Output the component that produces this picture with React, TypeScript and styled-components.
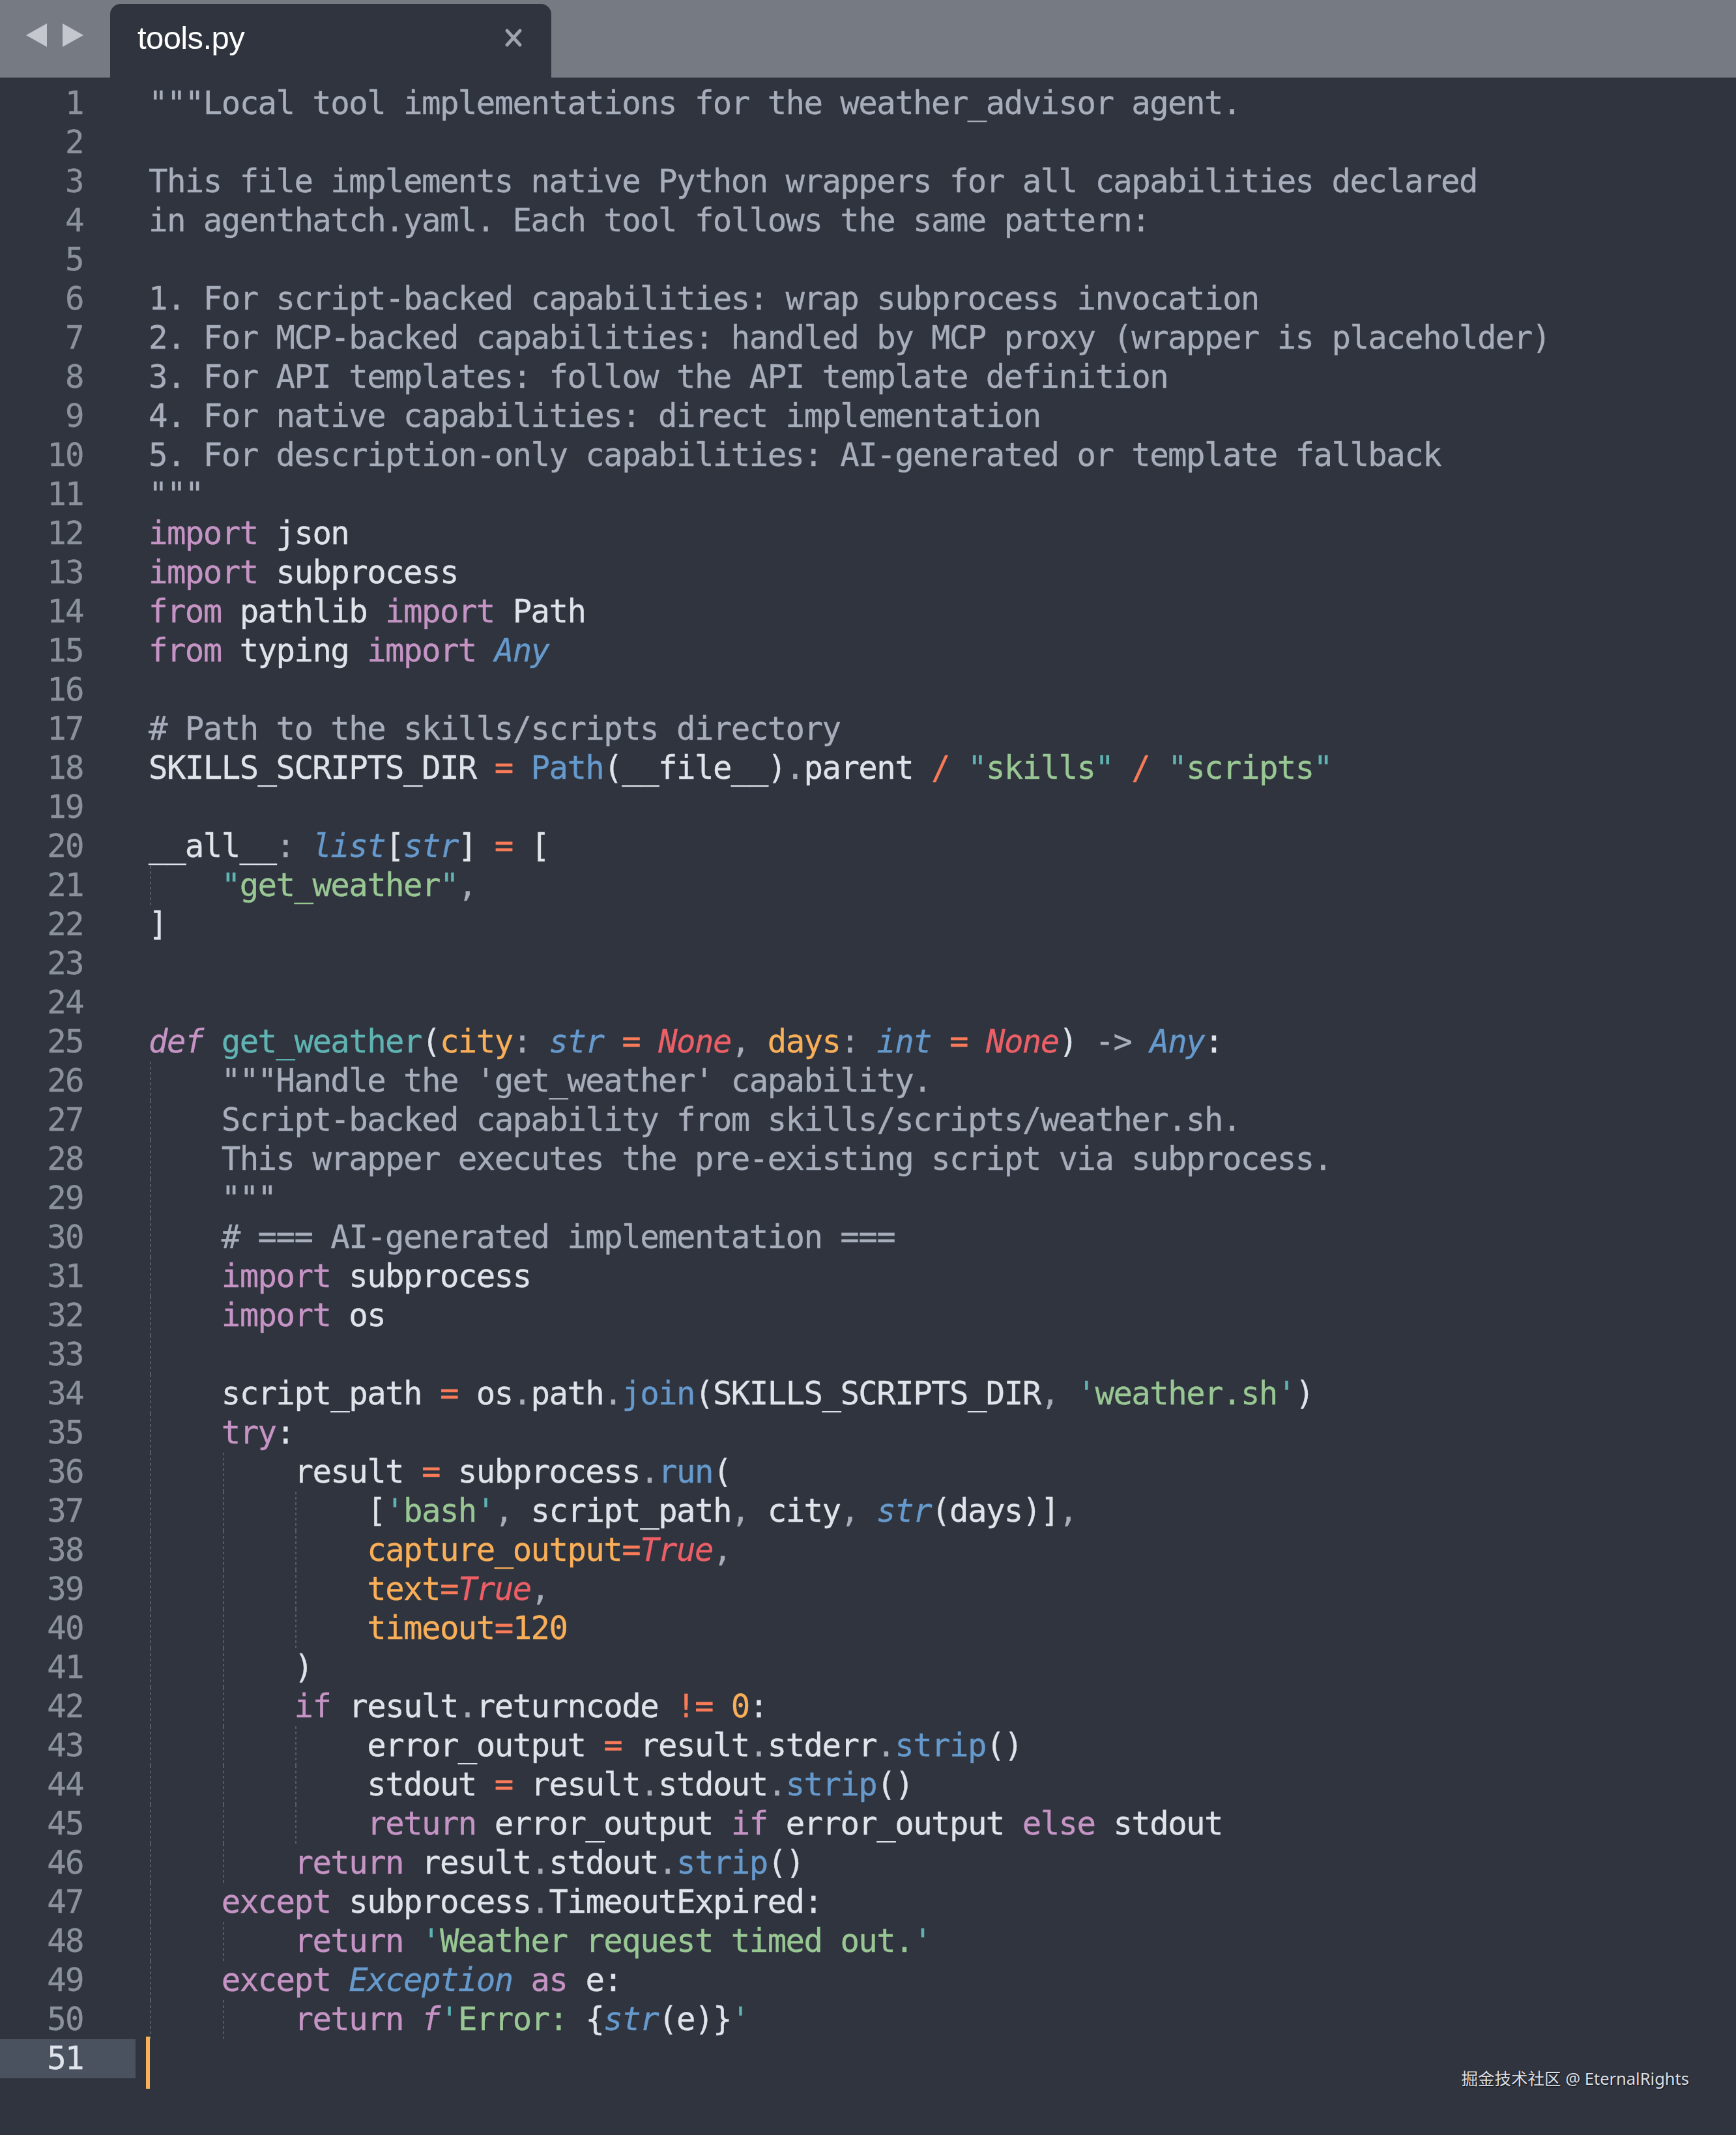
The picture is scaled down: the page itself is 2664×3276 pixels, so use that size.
import React from 'react';
import styled, { createGlobalStyle, css } from 'styled-components';

const GlobalStyle = createGlobalStyle`
  html, body { margin: 0; padding: 0; background: #2f343e; }
  #root { width: 2664px; height: 3276px; overflow: hidden; }
`;

type Kind =
  | 'p' | 'kw' | 'kwi' | 'str' | 'q' | 'fn' | 'type' | 'cls' | 'name'
  | 'param' | 'const' | 'op' | 'num' | 'cm' | 'punc';

const palette: Record<Kind, { color: string; italic?: boolean }> = {
  p: { color: '#dfe3ea' },
  kw: { color: '#c594c5' },
  kwi: { color: '#c594c5', italic: true },
  str: { color: '#99c794' },
  q: { color: '#5fb3b3' },
  fn: { color: '#6699cc' },
  type: { color: '#6699cc', italic: true },
  cls: { color: '#6699cc' },
  name: { color: '#5fb3b3' },
  param: { color: '#f9ae58' },
  const: { color: '#ec5f67', italic: true },
  op: { color: '#f97b58' },
  num: { color: '#f9ae58' },
  cm: { color: '#a7adba' },
  punc: { color: '#a7adba' },
};

type Tok = [string, Kind?];
type LineDef = { indent?: number; guides?: number; toks: Tok[] };

const cm = (s: string, indent = 0): LineDef => ({ indent, toks: [[s, 'cm']] });
const blank = (guides = 0): LineDef => ({ guides, toks: [] });

const LINES: LineDef[] = [
  cm('"""Local tool implementations for the weather_advisor agent.'),
  blank(),
  cm('This file implements native Python wrappers for all capabilities declared'),
  cm('in agenthatch.yaml. Each tool follows the same pattern:'),
  blank(),
  cm('1. For script-backed capabilities: wrap subprocess invocation'),
  cm('2. For MCP-backed capabilities: handled by MCP proxy (wrapper is placeholder)'),
  cm('3. For API templates: follow the API template definition'),
  cm('4. For native capabilities: direct implementation'),
  cm('5. For description-only capabilities: AI-generated or template fallback'),
  cm('"""'),
  { toks: [['import', 'kw'], [' json']] },
  { toks: [['import', 'kw'], [' subprocess']] },
  { toks: [['from', 'kw'], [' pathlib '], ['import', 'kw'], [' Path']] },
  { toks: [['from', 'kw'], [' typing '], ['import', 'kw'], [' '], ['Any', 'type']] },
  blank(),
  cm('# Path to the skills/scripts directory'),
  {
    toks: [
      ['SKILLS_SCRIPTS_DIR '], ['=', 'op'], [' '], ['Path', 'cls'], ['(__file__)'], ['.', 'punc'],
      ['parent '], ['/', 'op'], [' '], ['"', 'q'], ['skills', 'str'], ['"', 'q'], [' '], ['/', 'op'],
      [' '], ['"', 'q'], ['scripts', 'str'], ['"', 'q'],
    ],
  },
  blank(),
  {
    toks: [
      ['__all__'], [':', 'punc'], [' '], ['list', 'type'], ['['], ['str', 'type'], [']'], [' '],
      ['=', 'op'], [' ['],
    ],
  },
  { indent: 1, toks: [['"', 'q'], ['get_weather', 'str'], ['"', 'q'], [',', 'punc']] },
  { toks: [[']']] },
  blank(),
  blank(),
  {
    toks: [
      ['def', 'kwi'], [' '], ['get_weather', 'name'], ['('], ['city', 'param'], [':', 'punc'], [' '],
      ['str', 'type'], [' '], ['=', 'op'], [' '], ['None', 'const'], [',', 'punc'], [' '],
      ['days', 'param'], [':', 'punc'], [' '], ['int', 'type'], [' '], ['=', 'op'], [' '],
      ['None', 'const'], [')'], [' '], ['->', 'punc'], [' '], ['Any', 'type'], [':'],
    ],
  },
  cm('"""Handle the \'get_weather\' capability.', 1),
  cm('Script-backed capability from skills/scripts/weather.sh.', 1),
  cm('This wrapper executes the pre-existing script via subprocess.', 1),
  cm('"""', 1),
  cm('# === AI-generated implementation ===', 1),
  { indent: 1, toks: [['import', 'kw'], [' subprocess']] },
  { indent: 1, toks: [['import', 'kw'], [' os']] },
  blank(1),
  {
    indent: 1,
    toks: [
      ['script_path '], ['=', 'op'], [' os'], ['.', 'punc'], ['path'], ['.', 'punc'], ['join', 'fn'],
      ['(SKILLS_SCRIPTS_DIR'], [',', 'punc'], [' '], ["'", 'q'], ['weather.sh', 'str'], ["'", 'q'], [')'],
    ],
  },
  { indent: 1, toks: [['try', 'kw'], [':']] },
  {
    indent: 2,
    toks: [['result '], ['=', 'op'], [' subprocess'], ['.', 'punc'], ['run', 'fn'], ['(']],
  },
  {
    indent: 3,
    toks: [
      ['['], ["'", 'q'], ['bash', 'str'], ["'", 'q'], [',', 'punc'], [' script_path'], [',', 'punc'],
      [' city'], [',', 'punc'], [' '], ['str', 'type'], ['(days)]'], [',', 'punc'],
    ],
  },
  { indent: 3, toks: [['capture_output', 'param'], ['=', 'op'], ['True', 'const'], [',', 'punc']] },
  { indent: 3, toks: [['text', 'param'], ['=', 'op'], ['True', 'const'], [',', 'punc']] },
  { indent: 3, toks: [['timeout', 'param'], ['=', 'op'], ['120', 'num']] },
  { indent: 2, toks: [[')']] },
  {
    indent: 2,
    toks: [['if', 'kw'], [' result'], ['.', 'punc'], ['returncode '], ['!=', 'op'], [' '], ['0', 'num'], [':']],
  },
  {
    indent: 3,
    toks: [
      ['error_output '], ['=', 'op'], [' result'], ['.', 'punc'], ['stderr'], ['.', 'punc'],
      ['strip', 'fn'], ['()'],
    ],
  },
  {
    indent: 3,
    toks: [
      ['stdout '], ['=', 'op'], [' result'], ['.', 'punc'], ['stdout'], ['.', 'punc'], ['strip', 'fn'], ['()'],
    ],
  },
  {
    indent: 3,
    toks: [
      ['return', 'kw'], [' error_output '], ['if', 'kw'], [' error_output '], ['else', 'kw'], [' stdout'],
    ],
  },
  {
    indent: 2,
    toks: [['return', 'kw'], [' result'], ['.', 'punc'], ['stdout'], ['.', 'punc'], ['strip', 'fn'], ['()']],
  },
  { indent: 1, toks: [['except', 'kw'], [' subprocess'], ['.', 'punc'], ['TimeoutExpired:']] },
  {
    indent: 2,
    toks: [['return', 'kw'], [' '], ["'", 'q'], ['Weather request timed out.', 'str'], ["'", 'q']],
  },
  { indent: 1, toks: [['except', 'kw'], [' '], ['Exception', 'type'], [' '], ['as', 'kw'], [' e:']] },
  {
    indent: 2,
    toks: [
      ['return', 'kw'], [' '], ['f', 'kwi'], ["'", 'q'], ['Error: ', 'str'], ['{'], ['str', 'type'],
      ['(e)}'], ["'", 'q'],
    ],
  },
  blank(),
];

const ACTIVE_LINE = 51;

const Window = styled.div`
  width: 2664px;
  height: 3276px;
  display: flex;
  flex-direction: column;
  background: #2f343e;
  position: relative;
  overflow: hidden;
`;

const TabBar = styled.div`
  height: 119px;
  flex: none;
  display: flex;
  align-items: flex-end;
  background: #767b83;
`;

const NavArrows = styled.div`
  width: 169px;
  height: 119px;
  display: flex;
  align-items: flex-start;
  padding: 34px 0 0 38px;
  gap: 20px;
  box-sizing: border-box;
`;

const Tab = styled.div`
  width: 677px;
  height: 113px;
  box-sizing: border-box;
  background: #2f343e;
  border-radius: 16px 16px 0 0;
  display: flex;
  align-items: center;
  justify-content: space-between;
  padding: 0 44px 10px 42px;
`;

const TabTitle = styled.span`
  font-family: 'Liberation Sans', Arial, sans-serif;
  font-size: 49px;
  color: #ffffff;
  letter-spacing: -0.6px;
`;

const CloseIcon = styled.svg`
  width: 28px;
  height: 30px;
  display: block;
`;

const Editor = styled.div`
  flex: 1;
  padding-top: 10px;
  display: flex;
  flex-direction: column;
  font-family: 'DejaVu Sans Mono', Menlo, monospace;
  font-size: 49px;
  letter-spacing: -1.57px;
  line-height: 60px;
  -webkit-text-stroke: 0.3px currentColor;
`;

const Row = styled.div`
  display: flex;
  height: 60px;
  align-items: stretch;
`;

const Gutter = styled.div<{ $active: boolean }>`
  width: 208px;
  flex: none;
  box-sizing: border-box;
  padding-right: 80px;
  text-align: right;
  color: #8b919a;
  ${(p) =>
    p.$active &&
    css`
      background: #4a5260;
      color: #dfe3ea;
    `}
`;

const Code = styled.div`
  margin-left: 20px;
  white-space: pre;
  position: relative;
  display: flex;
  align-items: stretch;
`;

const Guide = styled.span<{ $show: boolean }>`
  display: inline-block;
  white-space: pre;
  ${(p) =>
    p.$show &&
    css`
      background-image: linear-gradient(to bottom, #535b67 50%, transparent 50%);
      background-size: 2px 8px;
      background-repeat: repeat-y;
      background-position: 2px 0;
    `}
`;

const Tok = styled.span<{ $kind: Kind }>`
  color: ${(p) => palette[p.$kind].color};
  font-style: ${(p) => (palette[p.$kind].italic ? 'italic' : 'normal')};
`;

const Caret = styled.span`
  position: absolute;
  left: -4px;
  top: -4px;
  width: 6px;
  height: 80px;
  background: #f9ae58;
`;

const Watermark = styled.div`
  position: absolute;
  right: 72px;
  bottom: 70px;
  font-family: 'Noto Sans', 'Noto Sans CJK SC', sans-serif;
  font-size: 25.5px;
  color: #dcdfe4;
  text-shadow: 1px 1px 2px rgba(0, 0, 0, 0.7);
`;

const Arrow: React.FC<{ dir: 'left' | 'right' }> = ({ dir }) => (
  <svg width="36" height="40" viewBox="0 0 36 40">
    {dir === 'left' ? (
      <polygon points="34,2 34,38 2,20" fill="#c4c8ce" />
    ) : (
      <polygon points="2,2 2,38 34,20" fill="#c4c8ce" />
    )}
  </svg>
);

export default function App() {
  return (
    <>
      <GlobalStyle />
      <Window>
        <TabBar>
          <NavArrows>
            <Arrow dir="left" />
            <Arrow dir="right" />
          </NavArrows>
          <Tab>
            <TabTitle>tools.py</TabTitle>
            <CloseIcon viewBox="0 0 28 30">
              <path d="M4 4 L24 26 M24 4 L4 26" stroke="#9fa4ac" strokeWidth="5" strokeLinecap="round" />
            </CloseIcon>
          </Tab>
        </TabBar>
        <Editor>
          {LINES.map((line, i) => {
            const n = i + 1;
            const indent = line.indent ?? 0;
            const guides = line.toks.length ? indent : line.guides ?? 0;
            const units = Math.max(indent, guides);
            return (
              <Row key={n}>
                <Gutter $active={n === ACTIVE_LINE}>{n}</Gutter>
                <Code>
                  {Array.from({ length: units }).map((_, g) => (
                    <Guide key={g} $show={g < guides}>
                      {'    '}
                    </Guide>
                  ))}
                  <span>
                    {line.toks.map(([text, kind], k) => (
                      <Tok key={k} $kind={kind ?? 'p'}>
                        {text}
                      </Tok>
                    ))}
                  </span>
                  {n === ACTIVE_LINE && <Caret />}
                </Code>
              </Row>
            );
          })}
        </Editor>
        <Watermark>掘金技术社区 @ EternalRights</Watermark>
      </Window>
    </>
  );
}
